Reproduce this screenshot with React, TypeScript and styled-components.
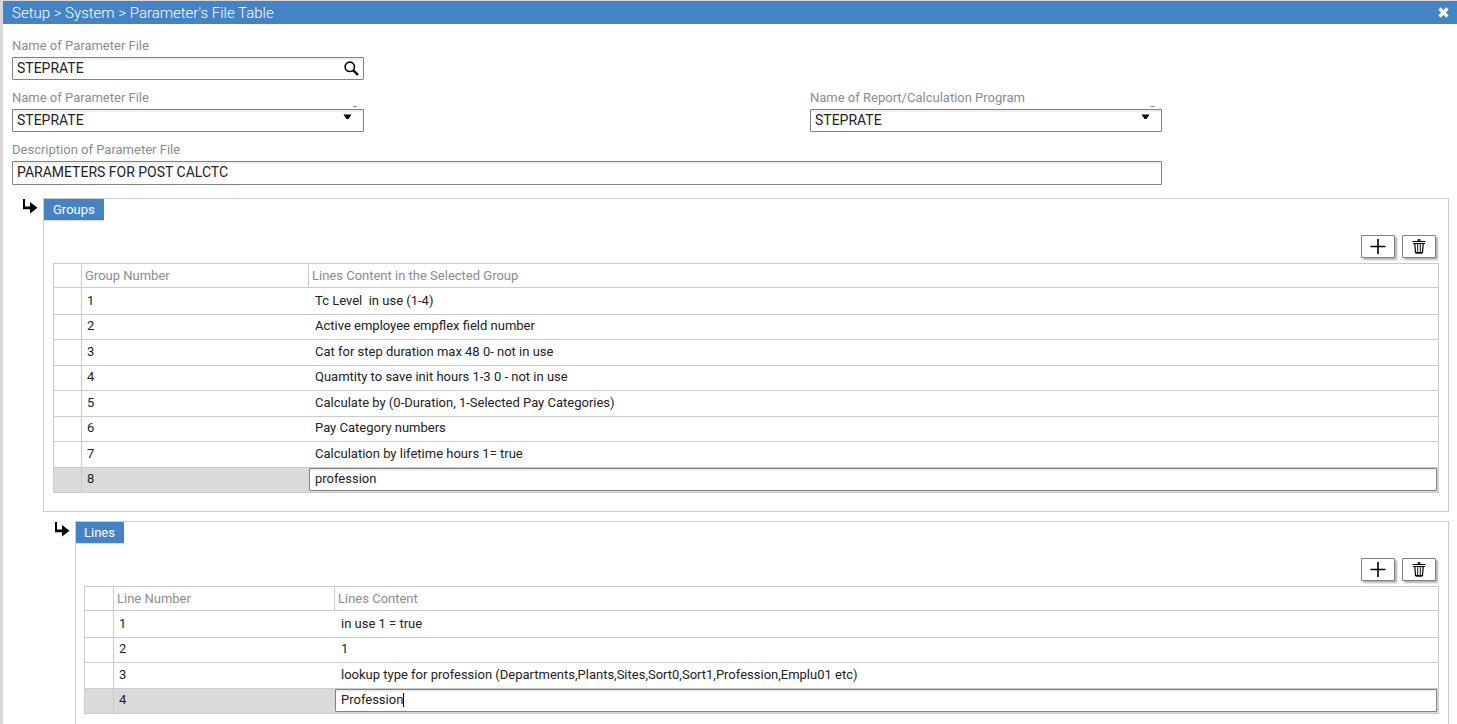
import React from "react";
import styled, { createGlobalStyle } from "styled-components";

const GlobalStyle = createGlobalStyle`
  *, *::before, *::after { box-sizing: border-box; }
  body {
    margin: 0;
    background: #d9d8d9;
    color: #222;
    font: 13px/16px Roboto, "Liberation Sans", sans-serif;
  }
  input, select, button { font: inherit; color: inherit; }
`;

const Window = styled.div`
  display: flex;
  flex-direction: column;
  height: 100vh;
  padding: 1px 0 0 3px;
  overflow: hidden;
`;

const TitleBar = styled.header`
  display: flex;
  flex: none;
  align-items: center;
  justify-content: space-between;
  height: 23px;
  padding: 0 8px 0 9px;
  background: #4583c4;
  color: #fff;
`;

const Title = styled.h1`
  margin: 0;
  font-size: 15px;
  font-weight: 300;
`;

const CloseButton = styled.button`
  display: flex;
  padding: 0 0 1px;
  border: 0;
  background: none;
  color: #fff;
`;

const Content = styled.main`
  display: flex;
  flex: 1;
  flex-direction: column;
  padding: 14px 8px 0 9px;
  background: #fff;
`;

const Form = styled.form`
  display: flex;
  flex-direction: column;
  gap: 10px;
  max-width: 1150px;
`;

const FieldRow = styled.div`
  display: flex;
  justify-content: space-between;
`;

const Field = styled.div<{ $wide?: boolean }>`
  display: flex;
  flex-direction: column;
  gap: 3px;
  width: ${(p) => (p.$wide ? "100%" : "352px")};
`;

const Label = styled.label`
  height: 16px;
  color: #8c8c8c;
`;

const Tick = styled.span`
  position: absolute;
  top: -4px;
  right: 6px;
  width: 4px;
  height: 1px;
  background: #999;
`;

const Control = styled.div<{ $tall?: boolean }>`
  position: relative;
  display: flex;
  align-items: center;
  height: ${(p) => (p.$tall ? "24px" : "23px")};
  border: 1px solid #808080;
  border-radius: 1px;
  background: #fff;
  box-shadow: inset 0 2px 0 #efefef;
`;

const TextInput = styled.input`
  flex: 1;
  min-width: 0;
  height: 20px;
  padding: 0 4px 2px;
  border: 0;
  outline: 0;
  background: transparent;
  font-size: 14px;
`;

const Select = styled.select`
  flex: 1;
  height: 20px;
  padding: 0 4px 2px;
  border: 0;
  outline: 0;
  appearance: none;
  background: transparent;
  font-size: 14px;
`;

const SelectArrow = styled.svg`
  position: absolute;
  top: 4px;
  right: 11px;
  pointer-events: none;
`;

const SearchButton = styled.button`
  display: flex;
  padding: 0 4px 0 0;
  border: 0;
  background: none;
`;

const Section = styled.section<{ $level: number }>`
  display: flex;
  flex: ${(p) => (p.$level > 1 ? "1" : "none")};
  margin-top: ${(p) => (p.$level > 1 ? "9px" : "13px")};
  padding-left: ${(p) => (p.$level > 1 ? "42px" : "10px")};
`;

const BranchArrow = styled.svg`
  flex: none;
  margin-right: 5px;
`;

const Panel = styled.div<{ $open?: boolean }>`
  flex: 1;
  min-width: 0;
  padding: 0 9px 18px ${(p) => (p.$open ? "8px" : "9px")};
  border: 1px solid #cbcbcb;
  border-bottom-width: ${(p) => (p.$open ? "0" : "1px")};
`;

const Tab = styled.h2<{ $open?: boolean }>`
  width: fit-content;
  height: 22px;
  margin: 0 0 0 ${(p) => (p.$open ? "-8px" : "-9px")};
  padding: 0 9px 0 ${(p) => (p.$open ? "8px" : "9px")};
  border-bottom: 1px solid #d3dbe4;
  background: #4583c4;
  color: #fff;
  font-size: 13px;
  font-weight: 400;
  line-height: 21px;
`;

const Toolbar = styled.div`
  display: flex;
  justify-content: flex-end;
  gap: 7px;
  padding: 14px 3px 5px 0;
`;

const ToolButton = styled.button`
  display: flex;
  align-items: center;
  justify-content: center;
  width: 34px;
  height: 23px;
  padding: 0;
  border: 1px solid #808080;
  border-radius: 1px;
  background: #fff;
  box-shadow: 2px 2px 2px rgba(0, 0, 0, 0.3);
`;

const Grid = styled.table`
  width: 100%;
  border: 1px solid #cbcbcb;
  border-bottom: 0;
  border-spacing: 0;
  table-layout: fixed;
`;

const HeadCell = styled.th<{ $width?: number }>`
  width: ${(p) => (p.$width ? `${p.$width}px` : "auto")};
  height: 24px;
  padding: 0 3px;
  border-right: 1px solid #cbcbcb;
  border-bottom: 1px solid #cbcbcb;
  color: #8c8c8c;
  font-weight: 400;
  text-align: left;
  &:last-child { border-right: 0; }
`;

const Row = styled.tr<{ $selected?: boolean }>`
  height: 26px;
  background: ${(p) => (p.$selected ? "#dadad8" : "#fff")};
  &:first-child { height: 27px; }
  &:nth-child(even) { height: 25px; }
`;

const Cell = styled.td`
  padding: 0 6px 2px;
  border-bottom: 1px solid #cbcbcb;
  white-space: pre;
  &:first-child { border-right: 1px solid #cbcbcb; }
  &:nth-child(2) { padding-left: 5px; }
  tr:first-child > & { padding-bottom: 0; }
`;

const EditCell = styled(Cell)`
  padding: 0 1px 1px 0;
`;

const Editor = styled(Control)`
  overflow: hidden;
  padding: 0 0 2px 5px;
`;

const EditorInput = styled.input`
  field-sizing: content;
  height: 19px;
  padding: 0;
  border: 0;
  outline: 0;
  background: transparent;
`;

const Caret = styled.span`
  width: 1px;
  height: 14px;
  background: #000;
`;

type RecordGridProps = {
  name: string;
  numberTitle: string;
  contentTitle: string;
  widths: [number, number];
  rows: string[];
  level: number;
  caret?: boolean;
};

function RecordSection({ name, numberTitle, contentTitle, widths, rows, level, caret }: RecordGridProps) {
  const open = level > 1;
  return (
    <Section $level={level}>
      <BranchArrow width="16" height="17" viewBox="0 0 16 17" aria-hidden="true">
        <path d="M1 1h2v7.500H8V4l7.500 5.700L8 15.500v-4.200H1z" fill="#000" />
      </BranchArrow>
      <Panel $open={open}>
        <Tab $open={open}>{name}</Tab>
        <Toolbar>
          <ToolButton type="button" aria-label={`Add to ${name}`}>
            <svg width="16" height="15" viewBox="0 0 16 15" aria-hidden="true">
              <path d="M8 0v15M0.500 7.500h15" stroke="#000" strokeWidth="1.600" fill="none" />
            </svg>
          </ToolButton>
          <ToolButton type="button" aria-label={`Delete from ${name}`}>
            <svg width="14" height="15" viewBox="0 0 14 15" fill="none" stroke="#000" aria-hidden="true">
              <path d="M5.500 1h3" strokeWidth="1.600" />
              <path d="M0.500 2.500h13M1 4.500h12" strokeWidth="1" />
              <path d="M2.800 4.500l.7 9h7l.7-9" strokeWidth="1.200" />
              <path d="M5.700 5v8.500M8.300 5v8.500" strokeWidth="0.900" />
              <path d="M3.500 14h7" strokeWidth="1.400" />
            </svg>
          </ToolButton>
        </Toolbar>
        <Grid>
          <thead>
            <tr>
              <HeadCell $width={widths[0]} aria-label="Selection" />
              <HeadCell $width={widths[1]}>{numberTitle}</HeadCell>
              <HeadCell>{contentTitle}</HeadCell>
            </tr>
          </thead>
          <tbody>
            {rows.map((text, i) => {
              const selected = i === rows.length - 1;
              return (
                <Row key={i} $selected={selected}>
                  <Cell />
                  <Cell>{i + 1}</Cell>
                  {selected ? (
                    <EditCell>
                      <Editor>
                        <EditorInput aria-label={contentTitle} defaultValue={text} />
                        {caret && <Caret />}
                      </Editor>
                    </EditCell>
                  ) : (
                    <Cell>{text}</Cell>
                  )}
                </Row>
              );
            })}
          </tbody>
        </Grid>
      </Panel>
    </Section>
  );
}

function DropDown({ id, label }: { id: string; label: string }) {
  return (
    <Field>
      <Label htmlFor={id}>{label}</Label>
      <Control>
        <Tick />
        <Select id={id} defaultValue="STEPRATE">
          <option>STEPRATE</option>
        </Select>
        <SelectArrow width="9" height="6" viewBox="0 0 9 6" aria-hidden="true">
          <path d="M0.500 0.500h8L5.500 5h-2z" fill="#000" />
        </SelectArrow>
      </Control>
    </Field>
  );
}

const groups = [
  "Tc Level  in use (1-4)",
  "Active employee empflex field number",
  "Cat for step duration max 48 0- not in use",
  "Quamtity to save init hours 1-3 0 - not in use",
  "Calculate by (0-Duration, 1-Selected Pay Categories)",
  "Pay Category numbers",
  "Calculation by lifetime hours 1= true",
  "profession",
];

const lines = [
  "in use 1 = true",
  "1",
  "lookup type for profession (Departments,Plants,Sites,Sort0,Sort1,Profession,Emplu01 etc)",
  "Profession",
];

export default function App() {
  return (
    <>
      <GlobalStyle />
      <Window>
        <TitleBar>
          <Title>Setup &gt; System &gt; Parameter's File Table</Title>
          <CloseButton type="button" aria-label="Close">
            <svg width="11" height="11" viewBox="0 0 11 11" aria-hidden="true">
              <path d="M1.500 1.500l8 8M9.500 1.500l-8 8" stroke="#fff" strokeWidth="3.200" />
            </svg>
          </CloseButton>
        </TitleBar>
        <Content>
          <Form>
            <Field>
              <Label htmlFor="find">Name of Parameter File</Label>
              <Control>
                <TextInput id="find" defaultValue="STEPRATE" />
                <SearchButton type="button" aria-label="Search">
                  <svg width="15" height="15" viewBox="0 0 15 15" fill="none" stroke="#000" aria-hidden="true">
                    <circle cx="5.800" cy="5.800" r="4.700" strokeWidth="1.600" />
                    <path d="M9.300 9.300l4.700 4.700" strokeWidth="2.400" />
                  </svg>
                </SearchButton>
              </Control>
            </Field>
            <FieldRow>
              <DropDown id="file" label="Name of Parameter File" />
              <DropDown id="program" label="Name of Report/Calculation Program" />
            </FieldRow>
            <Field $wide>
              <Label htmlFor="description">Description of Parameter File</Label>
              <Control $tall>
                <TextInput id="description" defaultValue="PARAMETERS FOR POST CALCTC" />
              </Control>
            </Field>
          </Form>
          <RecordSection
            name="Groups"
            numberTitle="Group Number"
            contentTitle="Lines Content in the Selected Group"
            widths={[28, 227]}
            rows={groups}
            level={1}
          />
          <RecordSection
            name="Lines"
            numberTitle="Line Number"
            contentTitle="Lines Content"
            widths={[29, 221]}
            rows={lines}
            level={2}
            caret
          />
        </Content>
      </Window>
    </>
  );
}
